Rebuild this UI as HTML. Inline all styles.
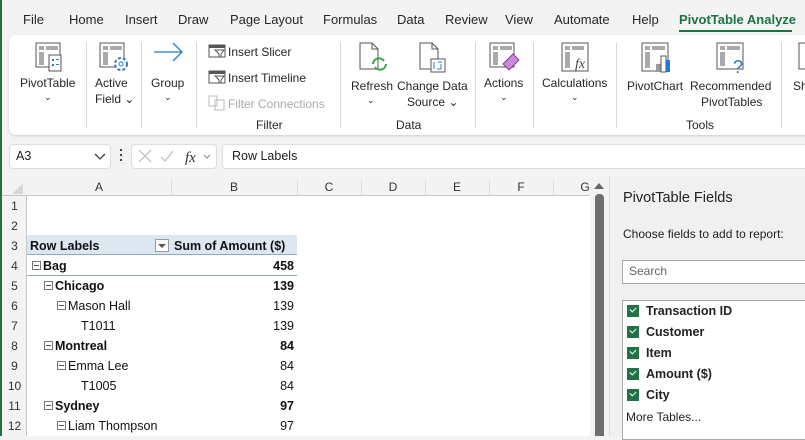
<!DOCTYPE html>
<html><head><style>
*{margin:0;padding:0;box-sizing:border-box}
body{width:805px;height:436px;overflow:hidden;background:#f3f3f3;font-family:"Liberation Sans",sans-serif;font-size:12px;color:#222;position:relative}
.a{position:absolute;white-space:nowrap}
.tab{position:absolute;top:12px;font-size:13px;color:#262626}
.lbl{position:absolute;font-size:12px;color:#262626;text-align:center}
.sep{position:absolute;top:42px;width:1px;height:86px;background:#d8d8d8}
.rn{position:absolute;left:2px;width:25px;text-align:center;font-size:12px;color:#333}
.ch{position:absolute;top:180px;font-size:12px;color:#333;text-align:center}
.cell{position:absolute;font-size:12.5px;color:#111}
.b{font-weight:bold}
.box{display:inline-block;width:9px;height:9px;border:1px solid #777;position:relative;margin-right:2px;vertical-align:0px}
.box:after{content:"";position:absolute;left:1px;top:3px;width:5px;height:1px;background:#555}
.cb{position:absolute;left:627px;width:12px;height:12px;background:#217346}
.cb:after{content:"";position:absolute;left:3px;top:2px;width:5px;height:3px;border-left:1.5px solid #fff;border-bottom:1.5px solid #fff;transform:rotate(-45deg)}
.fld{position:absolute;left:646px;font-weight:bold;font-size:12.5px;color:#222}
</style></head><body>
<div class="a" style="left:0;top:0;width:2px;height:436px;background:#217346"></div>
<div class="tab" style="left:23px">File</div>
<div class="tab" style="left:69px">Home</div>
<div class="tab" style="left:125px">Insert</div>
<div class="tab" style="left:178px">Draw</div>
<div class="tab" style="left:230px">Page Layout</div>
<div class="tab" style="left:323px">Formulas</div>
<div class="tab" style="left:397px">Data</div>
<div class="tab" style="left:445px">Review</div>
<div class="tab" style="left:505px">View</div>
<div class="tab" style="left:554px">Automate</div>
<div class="tab" style="left:632px">Help</div>
<div class="tab" style="left:679px;color:#1e7145;font-weight:bold">PivotTable Analyze</div>
<div class="a" style="left:679px;top:30px;width:113px;height:2px;background:#1e7145"></div>
<div class="a" style="left:9px;top:35px;width:810px;height:100px;background:#fff;border-radius:7px;box-shadow:0 1px 2px rgba(0,0,0,.15)"></div>
<svg class="a" style="left:35px;top:42px" width="30" height="32"><rect x="1" y="1" width="24" height="24" fill="none" stroke="#555"/><rect x="4" y="4" width="5" height="4" fill="#aaa"/><rect x="11" y="4" width="12" height="4" fill="#aaa"/><rect x="4" y="10" width="5" height="13" fill="#aaa"/><rect x="14" y="13" width="12" height="16" fill="#fff" stroke="#555"/><rect x="17" y="17" width="2" height="2" fill="#2b78c5"/><rect x="17" y="22" width="2" height="2" fill="#2b78c5"/><rect x="21" y="17" width="3" height="1" fill="#2b78c5"/><rect x="21" y="22" width="3" height="1" fill="#2b78c5"/></svg>
<div class="lbl" style="left:20px;top:76px">PivotTable</div>
<div class="lbl" style="left:44px;top:92px;font-size:9px">⌄</div>
<div class="sep" style="left:86px"></div>
<svg class="a" style="left:99px;top:42px" width="32" height="32"><rect x="1" y="1" width="24" height="24" fill="none" stroke="#555"/><rect x="4" y="4" width="5" height="4" fill="#aaa"/><rect x="11" y="4" width="12" height="4" fill="#aaa"/><rect x="4" y="10" width="5" height="13" fill="#aaa"/><circle cx="22" cy="22" r="6" fill="#fff" stroke="#2b78c5" stroke-width="2" stroke-dasharray="3 2"/><circle cx="22" cy="22" r="2" fill="none" stroke="#2b78c5"/></svg>
<div class="lbl" style="left:95px;top:76px">Active</div>
<div class="lbl" style="left:95px;top:92px">Field ⌄</div>
<div class="sep" style="left:141px"></div>
<svg class="a" style="left:152px;top:42px" width="32" height="20"><path d="M2 10H30M21 1L30 10L21 19" fill="none" stroke="#2b78c5" stroke-width="1.3"/></svg>
<div class="lbl" style="left:151px;top:76px">Group</div>
<div class="lbl" style="left:164px;top:92px;font-size:9px">⌄</div>
<div class="sep" style="left:196px"></div>
<svg class="a" style="left:208px;top:44px" width="18" height="14"><rect x="1" y="1" width="16" height="12" fill="none" stroke="#555"/><rect x="1" y="1" width="16" height="3" fill="#555"/><path d="M7 6h9l-3 4v3h-2v-3z" fill="#fff" stroke="#555"/></svg>
<div class="lbl" style="left:228px;top:45px">Insert Slicer</div>
<svg class="a" style="left:208px;top:70px" width="18" height="14"><rect x="1" y="1" width="16" height="12" fill="none" stroke="#555"/><rect x="1" y="1" width="16" height="3" fill="#555"/><path d="M7 6h9l-3 4v3h-2v-3z" fill="#fff" stroke="#555"/></svg>
<div class="lbl" style="left:228px;top:71px">Insert Timeline</div>
<svg class="a" style="left:208px;top:95px" width="18" height="16"><rect x="1" y="1" width="8" height="10" fill="none" stroke="#bbb"/><rect x="7" y="5" width="9" height="10" fill="none" stroke="#bbb"/></svg>
<div class="lbl" style="left:228px;top:97px;color:#aaa">Filter Connections</div>
<div class="lbl" style="left:256px;top:118px">Filter</div>
<div class="sep" style="left:340px"></div>
<svg class="a" style="left:359px;top:42px" width="32" height="34"><path d="M1 1h12l6 6v20H1z" fill="#fff" stroke="#555"/><path d="M13 1v6h6" fill="none" stroke="#555"/><path d="M14 22a6 6 0 0 1 11-3M27 22a6 6 0 0 1-11 3" fill="none" stroke="#3aa54a" stroke-width="2"/></svg>
<div class="lbl" style="left:351px;top:79px">Refresh</div>
<div class="lbl" style="left:367px;top:95px;font-size:9px">⌄</div>
<svg class="a" style="left:419px;top:42px" width="30" height="34"><path d="M1 1h12l6 6v20H1z" fill="#fff" stroke="#555"/><path d="M13 1v6h6" fill="none" stroke="#555"/><rect x="12" y="17" width="14" height="13" fill="#fff" stroke="#555"/><path d="M15 20v7M19 20h4M22 22v5h-4" stroke="#2b78c5" fill="none"/></svg>
<div class="lbl" style="left:397px;top:79px">Change Data</div>
<div class="lbl" style="left:407px;top:95px">Source ⌄</div>
<div class="lbl" style="left:396px;top:118px">Data</div>
<div class="sep" style="left:475px"></div>
<svg class="a" style="left:489px;top:42px" width="32" height="32"><rect x="1" y="1" width="24" height="24" fill="none" stroke="#555"/><rect x="4" y="4" width="5" height="4" fill="#aaa"/><rect x="11" y="4" width="12" height="4" fill="#aaa"/><rect x="4" y="10" width="5" height="13" fill="#aaa"/><path d="M14 22l10-10 6 6-10 10z" fill="#c98ad6" stroke="#8a3c9e"/></svg>
<div class="lbl" style="left:484px;top:76px">Actions</div>
<div class="lbl" style="left:500px;top:92px;font-size:9px">⌄</div>
<div class="sep" style="left:533px"></div>
<svg class="a" style="left:561px;top:42px" width="30" height="32"><rect x="1" y="1" width="26" height="28" fill="none" stroke="#555"/><rect x="4" y="4" width="5" height="4" fill="#aaa"/><rect x="11" y="4" width="12" height="4" fill="#aaa"/><rect x="4" y="10" width="5" height="16" fill="#aaa"/><text x="14" y="26" font-family="Liberation Serif" font-style="italic" font-size="14" fill="#444">fx</text></svg>
<div class="lbl" style="left:542px;top:76px">Calculations</div>
<div class="lbl" style="left:571px;top:92px;font-size:9px">⌄</div>
<div class="sep" style="left:616px"></div>
<svg class="a" style="left:641px;top:42px" width="32" height="32"><rect x="1" y="1" width="26" height="28" fill="none" stroke="#555"/><rect x="4" y="4" width="5" height="4" fill="#aaa"/><rect x="11" y="4" width="13" height="4" fill="#aaa"/><rect x="4" y="10" width="5" height="16" fill="#aaa"/><rect x="15" y="22" width="5" height="8" fill="#999"/><rect x="20" y="14" width="5" height="16" fill="#fff" stroke="#555"/><rect x="25" y="18" width="4" height="12" fill="#2b78c5"/></svg>
<div class="lbl" style="left:627px;top:79px">PivotChart</div>
<svg class="a" style="left:716px;top:42px" width="32" height="32"><rect x="1" y="1" width="26" height="26" fill="none" stroke="#555"/><rect x="4" y="4" width="5" height="4" fill="#aaa"/><rect x="11" y="4" width="13" height="4" fill="#aaa"/><rect x="4" y="10" width="5" height="14" fill="#aaa"/><text x="17" y="31" font-size="18" fill="#2b78c5">?</text></svg>
<div class="lbl" style="left:690px;top:79px">Recommended</div>
<div class="lbl" style="left:701px;top:95px">PivotTables</div>
<div class="lbl" style="left:686px;top:118px">Tools</div>
<div class="sep" style="left:781px"></div>
<svg class="a" style="left:796px;top:42px" width="12" height="30"><rect x="3" y="1" width="12" height="26" fill="none" stroke="#555"/></svg>
<div class="lbl" style="left:793px;top:79px">Sh</div>
<div class="a" style="left:9px;top:144px;width:102px;height:25px;background:#fff;border:1px solid #ddd;border-radius:4px"></div>
<div class="a" style="left:16px;top:149px;font-size:12.5px">A3</div>
<svg class="a" style="left:94px;top:153px" width="12" height="8"><path d="M1 1l5 5 5-5" fill="none" stroke="#444" stroke-width="1.3"/></svg>
<div class="a" style="left:120px;top:149px;width:2px;height:2px;background:#444;box-shadow:0 5px #444,0 10px #444"></div>
<div class="a" style="left:131px;top:144px;width:86px;height:25px;background:#fff;border:1px solid #ddd;border-radius:4px"></div>
<svg class="a" style="left:137px;top:148px" width="80" height="18"><path d="M2 2l12 12M14 2L2 14" stroke="#bbb" stroke-width="1.2"/><path d="M24 9l4 4 8-10" fill="none" stroke="#bbb" stroke-width="1.2"/><text x="48" y="14" font-family="Liberation Serif" font-style="italic" font-size="15" fill="#333">fx</text><path d="M67 7l3 3 3-3" fill="none" stroke="#888"/></svg>
<div class="a" style="left:222px;top:144px;width:600px;height:25px;background:#fff;border:1px solid #ddd;border-radius:4px"></div>
<div class="a" style="left:232px;top:149px;font-size:12.5px">Row Labels</div>
<div class="a" style="left:2px;top:176px;width:605px;height:260px;background:#fff"></div>
<div class="a" style="left:2px;top:176px;width:605px;height:20px;background:#f3f3f3;border-bottom:1px solid #c8c8c8"></div>
<div class="a" style="left:2px;top:196px;width:25px;height:240px;background:#f3f3f3;border-right:1px solid #c8c8c8"></div>
<svg class="a" style="left:12px;top:183px" width="12" height="12"><path d="M11 0V11H0z" fill="#d8d8d8"/></svg>
<div class="a" style="left:171px;top:180px;width:1px;height:15px;background:#dcdcdc"></div>
<div class="a" style="left:297px;top:180px;width:1px;height:15px;background:#dcdcdc"></div>
<div class="a" style="left:361px;top:180px;width:1px;height:15px;background:#dcdcdc"></div>
<div class="a" style="left:425px;top:180px;width:1px;height:15px;background:#dcdcdc"></div>
<div class="a" style="left:489px;top:180px;width:1px;height:15px;background:#dcdcdc"></div>
<div class="a" style="left:553px;top:180px;width:1px;height:15px;background:#dcdcdc"></div>
<div class="ch" style="left:27px;width:144px">A</div>
<div class="ch" style="left:171px;width:126px">B</div>
<div class="ch" style="left:297px;width:64px">C</div>
<div class="ch" style="left:361px;width:64px">D</div>
<div class="ch" style="left:425px;width:64px">E</div>
<div class="ch" style="left:489px;width:64px">F</div>
<div class="ch" style="left:553px;width:64px">G</div>
<div class="rn" style="top:199px">1</div><div class="rn" style="top:219px">2</div><div class="rn" style="top:239px">3</div><div class="rn" style="top:259px">4</div><div class="rn" style="top:279px">5</div><div class="rn" style="top:299px">6</div><div class="rn" style="top:319px">7</div><div class="rn" style="top:339px">8</div><div class="rn" style="top:359px">9</div><div class="rn" style="top:379px">10</div><div class="rn" style="top:399px">11</div><div class="rn" style="top:419px">12</div>
<div class="a" style="left:27px;top:235px;width:270px;height:20px;background:#dde7f2;border-bottom:1px solid #8ea9c8"></div>
<div class="a" style="left:155px;top:239px;width:14px;height:13px;background:#fff;border:1px solid #999"></div>
<svg class="a" style="left:158px;top:244px" width="8" height="5"><path d="M0 0h8L4 4z" fill="#555"/></svg>
<div class="cell b" style="left:30px;top:239px">Row Labels</div>
<div class="cell b" style="left:174px;top:239px">Sum of Amount ($)</div>
<div class="cell b" style="left:32px;top:259px"><span class="box"></span>Bag</div><div class="cell b" style="left:240px;top:259px;width:54px;text-align:right">458</div>
<div class="a" style="left:27px;top:275px;width:270px;height:1px;background:#8ea9c8"></div>
<div class="cell b" style="left:44px;top:279px"><span class="box"></span>Chicago</div><div class="cell b" style="left:240px;top:279px;width:54px;text-align:right">139</div>
<div class="cell" style="left:57px;top:299px"><span class="box"></span>Mason Hall</div><div class="cell" style="left:240px;top:299px;width:54px;text-align:right">139</div>
<div class="cell" style="left:81px;top:319px">T1011</div><div class="cell" style="left:240px;top:319px;width:54px;text-align:right">139</div>
<div class="cell b" style="left:44px;top:339px"><span class="box"></span>Montreal</div><div class="cell b" style="left:240px;top:339px;width:54px;text-align:right">84</div>
<div class="cell" style="left:57px;top:359px"><span class="box"></span>Emma Lee</div><div class="cell" style="left:240px;top:359px;width:54px;text-align:right">84</div>
<div class="cell" style="left:81px;top:379px">T1005</div><div class="cell" style="left:240px;top:379px;width:54px;text-align:right">84</div>
<div class="cell b" style="left:44px;top:399px"><span class="box"></span>Sydney</div><div class="cell b" style="left:240px;top:399px;width:54px;text-align:right">97</div>
<div class="cell" style="left:57px;top:419px"><span class="box"></span>Liam Thompson</div><div class="cell" style="left:240px;top:419px;width:54px;text-align:right">97</div>
<div class="a" style="left:590px;top:176px;width:19px;height:260px;background:#f3f3f3"></div>
<svg class="a" style="left:594px;top:182px" width="10" height="8"><path d="M0 7L5 1L10 7z" fill="#666"/></svg>
<div class="a" style="left:595px;top:194px;width:9px;height:242px;background:#6e6e6e;border-radius:4px 4px 0 0"></div>
<div class="a" style="left:609px;top:176px;width:196px;height:260px;background:#f0f0f0;border-left:1px solid #ddd"></div>
<div class="a" style="left:623px;top:190px;font-size:14.5px;color:#222">PivotTable Fields</div>
<div class="a" style="left:623px;top:227px;font-size:12px">Choose fields to add to report:</div>
<div class="a" style="left:622px;top:260px;width:190px;height:24px;background:#fff;border:1px solid #aaa"></div>
<div class="a" style="left:629px;top:264px;font-size:12px;color:#666">Search</div>
<div class="a" style="left:622px;top:300px;width:190px;height:140px;background:#fff;border:1px solid #aaa"></div>
<div class="cb" style="top:305px"></div><div class="fld" style="top:304px">Transaction ID</div>
<div class="cb" style="top:326px"></div><div class="fld" style="top:325px">Customer</div>
<div class="cb" style="top:347px"></div><div class="fld" style="top:346px">Item</div>
<div class="cb" style="top:368px"></div><div class="fld" style="top:367px">Amount ($)</div>
<div class="cb" style="top:389px"></div><div class="fld" style="top:388px">City</div>
<div class="a" style="left:626px;top:410px;font-size:12px">More Tables...</div>
</body></html>
